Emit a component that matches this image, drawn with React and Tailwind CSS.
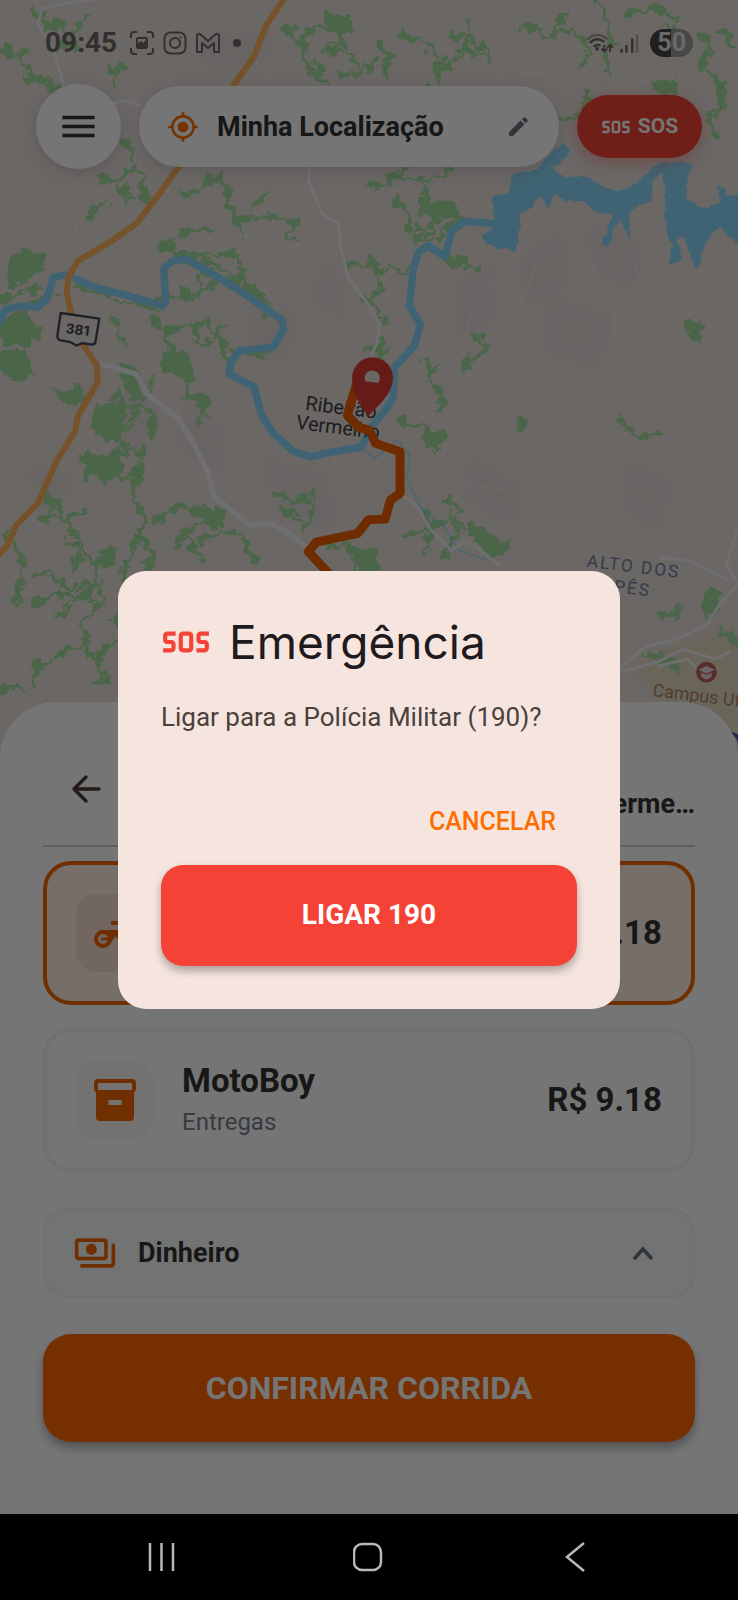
import { MdEdit, MdMenu, MdMyLocation, MdOutlinePayments, MdSos } from 'react-icons/md'

const forests = [
  'M70 15l30 40 25-10 15 30-10 20 30 5-5-30 35-40',
  'M0 105l35 12 30 38 45 35 40 30-5 25 35 40',
  'M95 62l40-15 5 40M60 165l50 12 70 50M60 100l-20 30',
  'M225 150l22 8-8 22M262 138l-14 20',
  'M255 300l30 18-5 25M210 378l40 10 35-35 25 20-8 40 25 20M260 395l10 35 18-12M190 465l18-28 20-6',
  'M385 410l45 0 10-30 28-5 22 28-12 25 30 40 45-10 55 5 20 10-15 30 25 10M510 455l2 50M530 440l45-30',
  'M600 60l40 20 30-25 40 5 15 30-30 5M640 85l10 60 45 30-30-50M700 50l-10-30M690 105l60 10 10 35M720 165l50-10 30-30',
  'M800 90l25 25-10 45M850 75l50 10 35 40 5 30 50-55 5-60M935 130l-5 50-30 0M985 100l60 30M955 70l60 20 30 40',
  'M1110 55l50 20 50-10 25 15M1200 30l-20 30M1230 70l20 45-15 30M1290 110l5 50M1300 100l-10-60-30-40M1330 30l50-10 60 10-10 40-20-15',
  'M1250 190l-10 60-60 0-20 30M1250 215l40 10M1490 70l25 40-30 30 50 40M1530 60l30 45M1520 160l20 60-35 30 20 50',
  'M780 400l60-20 40-40 80-5M820 375l90 10 50-25M900 400l30 60-20 40-30-20M950 440l30 30-35 20M870 500l60 15 10-25M840 420l30 40-5 40',
  'M735 560l60 10 75 5M790 545l20 65-25 30M770 630l60 60M810 720l-5 40M780 740l50 5',
  'M945 555l80 15M970 540l20 30M900 760l25 60 20 40-20 20M905 800l30-30M985 780l50-40-30-30',
  'M160 605l70 25 110 30M370 545l45-5 30 20 60 30 50 35 40 50 10 30-30 45-50 5',
  'M385 625l25 5 40-25 50-15M420 640l10-60 20 0M335 530l60-40 60 0M350 520l40 30 50-10 60 0 20 40-30 20 60 30 20 40',
  'M325 675l20 30 35 60 25 40M350 705l90-20 30 40 20 60 10-40M330 640l50-10M410 690l20 50 50-50M360 760l50 40-20 40 50 10-20 50M420 850l30 40',
  'M245 670l10 50 15 10M265 780l0 40 40 30 20-50',
  'M0 640l40-20 60-5M10 690l30-30 40 50M60 650l60-30M120 840l50 10 30-20',
  'M240 840l50 30-30 60 10 40M220 880l70-20 40 20-10 60M170 980l50 0 30-30 40 10M250 970l-60 20-10 40',
  'M300 990l-20 30-30-10M305 940l-10 60-15 60 30 50-30 60-20 50 30 70M360 1080l60 0 30 20-60 30M330 1110l50-40 60 30',
  'M90 1050l20 20-10 40M80 1100l50 0 50-10M115 1060l40 70 20 30-20 60M140 1150l50 30 20 50-30 40 40 20M70 1230l30-20 40 40 50-10 30 20-20 40-30 30 30 60 20 20',
  'M70 1290l40-30 50 10M120 1310l60-50 40-20M70 1430l60-40 50-20 30 40 20 40-30 0M80 1400l-10 60M210 1390l30-30 40 0M240 1310l50 50-20-80',
  'M0 1470l30-20 30 20M10 1130l40 60-15 100M300 1140l30 30-20 40M370 1160l20-30 40 60M420 1150l50-20 50 10 20 60',
  'M580 1050l50 20 40-30-10 60-20 30M600 1080l50 30M700 1170l40-20 20 30-10 40',
  'M860 1140l60-20 40-30 20 30M900 1080l20 40-20 60M940 1060l40 20-20 40 60 20 60 20M770 1180l20 30M940 1190l30-60',
  'M1000 720l30-10M1310 890l50 40 55-15M1400 1310l50-20-20 30M1500 1290l20-40M840 895l60 10 35 40-10 20',
]

const groves = [
  'M18 545L55 532 100 545 92 572 45 600 20 605z',
  'M0 690L50 668 90 700 60 735 20 735 0 720z',
  'M0 745L50 750 70 790 40 805 0 790z',
  'M350 745L400 755 410 795 380 800 345 775z',
  'M110 830L170 825 180 855 145 860z',
  'M205 865L265 855 262 930 225 938 190 900z',
  'M170 965L255 960 260 1000 220 1030 180 995z',
  'M400 1080L450 1075 475 1090 470 1120 440 1115z',
  'M205 1175L240 1170 250 1195 225 1210 205 1200z',
  'M690 40L740 38 755 65 720 70z',
  'M360 205L420 195 415 225 365 220z',
  'M890 420L945 430 965 455 925 465 895 450z',
  'M1390 170L1435 175 1430 200 1390 195z',
  'M1460 680L1490 680 1485 730 1465 710z',
  'M1000 1110L1060 1150 1070 1180 1040 1185 1005 1145z',
  'M1500 1250L1535 1255 1515 1300 1505 1310z',
  'M750 1165L800 1175 810 1205 770 1215z',
  'M260 770L300 790 295 830 255 815z',
  'M900 915L945 920 930 950 905 945z',
  'M1095 885L1125 888 1115 918 1098 912z',
  'M1370 1385L1420 1395 1445 1425 1400 1410z',
  'M1530 1330L1568 1350 1568 1380 1545 1365z',
]

const lanes = [
  'M540 0l30 30 20 0',
  'M540 125l35 55',
  'M0 470l100 20 60-10 5 110 40-10',
  'M150 350l20 200 60 20 240-60 100-20',
  'M330 200l40 300M620 480l-60 130 50 80',
  'M1050 0l20 150-60 80M1070 150l150 10 60 30 120-20 90 50',
  'M1568 340l-60 40M1100 560l-90 60-20 100M1140 560l-80 200-100 60-20 150 60 60 120 20 60 100 80 100',
  'M1240 550l70 80-10 120 70 70-20 150M1300 680l160-40 100 40M1200 900l20 160-60 120M1350 560l40 180 60 60',
  'M40 900l10 180 60 60M0 1250l110 20-20 110M500 1130l90 50M380 1010l100 60',
  'M700 950l60 150 90 60M560 1000l-30 150M620 770l80 50M1460 830l-30 250 60 110',
]

function CityMap() {
  return (
    <svg
      className="absolute inset-x-0 top-0 h-[762px] w-full bg-[#e8e0dd]"
      viewBox="0 0 1568 1620"
      preserveAspectRatio="xMidYMin slice"
      fill="none"
      strokeLinejoin="round"
      aria-hidden="true"
    >
      <defs>
        <filter id="ragged" x="0" y="0" width="1568" height="1620" filterUnits="userSpaceOnUse">
          <feTurbulence type="fractalNoise" baseFrequency="0.045" numOctaves="3" seed="4" />
          <feDisplacementMap in="SourceGraphic" scale="34" xChannelSelector="R" yChannelSelector="G" />
        </filter>
        <filter id="shore" x="0" y="0" width="1568" height="1620" filterUnits="userSpaceOnUse">
          <feTurbulence type="fractalNoise" baseFrequency="0.06" numOctaves="2" seed="9" />
          <feDisplacementMap in="SourceGraphic" scale="14" xChannelSelector="R" yChannelSelector="G" />
        </filter>
        <filter id="relief" x="0" y="0" width="1568" height="1620" filterUnits="userSpaceOnUse">
          <feGaussianBlur stdDeviation="12" />
        </filter>
      </defs>

      <g fill="#d6cdcb" opacity=".35" filter="url(#relief)">
        <path d="M420 90l160-20-30 60-110 10zM230 880l60-60 40 60-40 80zM540 640l80 30-20 90-70-20zM1100 560l90-60 10 100-70 50zM980 600l60-40 0 120-60 30zM1250 490l90 20 20 90-80-10z" />
        <path d="M560 980l120 30 30 100-100-20zM1010 980l90 60-20 70-90-60zM1180 640l110 40-30 90-100-30zM60 1000l90 10-40 90zM400 860l70 60-10 80-70-50zM1340 980l80 60-30 80-60-60zM700 560l-30 80 60 30z" />
      </g>
      <path d="M1340 1420l120-60 108-30v310h-80l-60-140z" fill="#e8dcc2" filter="url(#relief)" />

      <g stroke="#f4efee" strokeWidth="4" opacity=".4">
        {lanes.map((d) => (
          <path key={d} d={d} />
        ))}
      </g>

      <g stroke="#a2dd9d" filter="url(#ragged)">
        <g strokeWidth="7">
          {forests.map((d) => (
            <path key={d} d={d} />
          ))}
        </g>
        <g strokeWidth="16" strokeDasharray="26 40 14 58">
          {forests.map((d) => (
            <path key={d} d={d} />
          ))}
        </g>
        <g fill="#a2dd9d" strokeWidth="4">
          {groves.map((d) => (
            <path key={d} d={d} />
          ))}
        </g>
      </g>

      {/* river and reservoir */}
      <g stroke="#8cd8fa" strokeLinecap="round">
        <path
          strokeWidth="16"
          d="M-5 690L12 658 45 650 80 652 100 635 113 590 140 584M160 592L200 610 270 628 345 650 352 640 348 570 365 555 395 550 440 575 520 625 570 660 600 680 602 700 580 738 510 745 490 770 487 795 540 822 555 880 580 920 625 960 660 970 720 958 768 950 790 905 820 870 835 845 838 780 880 735 893 690 870 650 878 570 890 535 910 522 945 545 960 490 990 470 1045 475"
        />
        <path strokeWidth="4" opacity=".6" d="M770 950l25 25 50-40 25 30-5 55 30 60 50 40 30 50 60 20" />
      </g>
      <path
        filter="url(#shore)"
        fill="#8cd8fa"
        d="M1195 300L1212 320 1202 340 1172 358 1205 380 1240 375 1290 400 1325 405 1370 375 1400 345 1470 345 1460 380 1458 420 1480 440 1510 442 1530 425 1525 385 1545 415 1580 415V525L1555 510 1530 480 1505 500 1492 540 1482 572 1468 545 1448 500 1440 520 1450 555 1425 560 1430 520 1415 490 1412 400 1405 365 1388 385 1382 425 1345 445 1335 470 1340 510 1315 465 1290 530 1280 520 1300 455 1265 450 1240 430 1215 425 1200 432 1180 410 1165 440 1145 415 1130 440 1105 455 1100 525 1090 535 1030 515 1025 500 1050 480 1045 418 1080 410 1090 370 1140 360z"
      />

      {/* secondary roads */}
      <g stroke="#f1f2f8" strokeLinecap="round">
        <path strokeWidth="6" d="M135 180L115 110 80 50 90 18 150 5 200 0M235 220L265 213 300 225" />
        <path
          strokeWidth="6"
          d="M658 350L655 385 685 455 718 475 725 530 740 590 785 650 808 690 800 730 785 765M860 1055L890 1080 910 1120 960 1170 985 1150 1010 1160 1060 1200"
        />
        <path
          strokeWidth="11"
          d="M215 773L290 795 310 835 380 890 410 940 440 1000 455 1055 530 1115 575 1112 610 1130 660 1170"
        />
        <path
          strokeWidth="6"
          d="M1310 1425L1370 1375 1430 1360 1500 1330 1525 1290 1568 1240M1310 1430L1400 1405 1450 1380 1520 1400 1550 1385M1568 1120l-25 80 25 40M1543 1230l-80-40-60-5M1400 1415l60-15 40 40"
        />
      </g>

      {/* highway */}
      <path
        stroke="#ffb25c"
        strokeWidth="13"
        d="M605-5L565 55 540 120 490 190 420 310 375 360 340 410 290 475 240 510 165 555 145 590 142 620 152 670 175 730 205 775 208 810 165 885 160 915 120 980 80 1070 35 1115 15 1160-5 1182"
      />
      <path
        d="M129 665L211 677 203 725Q202 733 193 732L175 729 163 734 150 727 129 723Q121 721 122 712z"
        fill="#e8e0dd"
        stroke="#434a58"
        strokeWidth="5"
      />
      <text transform="rotate(7 166 700)" x="140" y="711" fill="#3f4654" className="font-['Inter'] text-[29px] font-bold">
        381
      </text>

      <g fill="#3f4148" className="font-['Roboto'] text-[42px]">
        <text transform="rotate(7 650 868)" x="648" y="871">Ribeirão</text>
        <text transform="rotate(7 628 908)" x="628" y="911">Vermelho</text>
      </g>
      <g fill="#76829f" className="font-['Roboto'] text-[37px] tracking-[4px]">
        <text transform="rotate(7 1248 1202)" x="1246" y="1204">ALTO DOS</text>
        <text transform="rotate(7 1290 1252)" x="1290" y="1256">IPÊS</text>
      </g>

      <circle cx="1501" cy="1428" r="22" fill="#c4605b" />
      <path d="M1484 1423l17-8 18 8-18 8zM1490 1429v9l11 6 11-6v-9l-11 5z" fill="#eadfdd" />
      <text transform="rotate(7 1388 1475)" x="1386" y="1479" fill="#b08263" className="font-['Roboto'] text-[38px]">
        Campus Uf
      </text>
      <path d="M1553 1554l20 8v40l-7-30z" fill="#4656b8" />

      {/* planned route */}
      <path
        stroke="#f06000"
        strokeWidth="19"
        d="M795 815L757 818 738 882 762 908 785 914 798 942 850 960V1048L830 1062 818 1103 783 1104 760 1133 672 1152 655 1172 705 1225"
      />
      <path
        d="M791 759A44 44 0 0 0 748 804C748 835 765 860 782 884 804 862 835 835 835 803A44 44 0 0 0 791 759z"
        fill="#de3b38"
      />
      <circle cx="791" cy="803" r="16" fill="#e8e0dd" />
      <path d="M776 810l29 4a16 16 0 0 1-29-4z" fill="#de3b38" />
    </svg>
  )
}

function StatusBar() {
  return (
    <div className="relative flex h-[84px] items-center justify-between px-[45px] pt-px text-[#6e6868]">
      <div className="flex items-center gap-[9px]">
        <span className="mr-1 text-[28px] leading-8 font-bold">09:45</span>
        <svg className="size-6" viewBox="0 0 24 24" fill="none" stroke="currentColor" strokeWidth="2">
          <path d="M1 7V4a3 3 0 0 1 3-3h3M17 1h3a3 3 0 0 1 3 3v3M23 17v3a3 3 0 0 1-3 3h-3M7 23H4a3 3 0 0 1-3-3v-3" />
          <path
            fillRule="evenodd"
            d="M8 6h8a2 2 0 0 1 2 2v8a2 2 0 0 1-2 2H8a2 2 0 0 1-2-2V8a2 2 0 0 1 2-2zM8 8v4l3-2 2 2 3-3V8z"
            fill="currentColor"
            stroke="none"
          />
        </svg>
        <svg className="size-6" viewBox="0 0 24 24" fill="none" stroke="currentColor" strokeWidth="2">
          <rect x="1.500" y="1.500" width="21" height="21" rx="6" />
          <circle cx="12" cy="12" r="5" />
          <circle cx="17.500" cy="6.500" r="1" fill="currentColor" stroke="none" />
        </svg>
        <svg className="size-6" viewBox="0 0 24 24" fill="none" stroke="currentColor" strokeWidth="2" strokeLinejoin="round">
          <path d="M1 21V5a2 2 0 0 1 3-2l8 7 8-7a2 2 0 0 1 3 2v16h-5v-9l-6 5-6-5v9z" />
        </svg>
        <span className="ml-1 size-2 rounded-full bg-current" />
      </div>
      <div className="flex items-center gap-[11px]">
        <svg className="h-6 w-[54px]" viewBox="0 0 56 24" fill="none" stroke="currentColor" strokeWidth="2.500">
          <path d="M2 9Q12-1 23 8" opacity=".5" />
          <path d="M5 12Q12 5 20 11M9 16Q13 12 16 15" />
          <circle cx="12.500" cy="18" r="2" fill="currentColor" stroke="none" />
          <path d="M20 14v7M17 18l3 3 3-3M26 21v-7M23 17l3-3 3 3" strokeWidth="2" />
          <path d="M38 22v-4M43 22v-8M49 22V7" />
          <path d="M54 22V3" opacity=".45" />
        </svg>
        <span className="rounded-full bg-linear-to-r from-[#484646] from-50% to-[#a29d9c] to-50% px-[7px] text-[25px] leading-7 font-bold text-[#e6e3e2]">
          50
        </span>
      </div>
    </div>
  )
}

function TopBar() {
  return (
    <header className="relative flex items-center gap-[18px] px-9">
      <button
        type="button"
        aria-label="Menu"
        className="flex size-[85px] shrink-0 items-center justify-center rounded-full bg-white text-[#333333] shadow-[0_4px_18px_rgba(0,0,0,0.15)]"
      >
        <MdMenu size={43} />
      </button>
      <button
        type="button"
        className="flex h-[81px] min-w-0 flex-1 items-center rounded-full bg-white px-7 text-left shadow-[0_4px_18px_rgba(0,0,0,0.15)]"
      >
        <MdMyLocation size={32} className="shrink-0 text-[#ff6d00]" />
        <span className="ml-[18px] flex-1 truncate text-[27px] leading-9 font-bold text-[#333333]">
          Minha Localização
        </span>
        <MdEdit size={25} className="shrink-0 text-[#6b7280]" />
      </button>
      <button
        type="button"
        className="flex h-[63px] w-[125px] shrink-0 items-center justify-center gap-[7px] rounded-full bg-[#f44336] text-[21px] font-bold text-white shadow-[0_4px_16px_rgba(244,67,54,0.4)]"
      >
        <MdSos size={30} />
        SOS
      </button>
    </header>
  )
}

function MotoIcon() {
  return (
    <svg className="h-12 w-14" viewBox="0 0 56 48" fill="none" stroke="currentColor" strokeWidth="4">
      <path d="M24 14h10l13 12M14 23h14l6 8 8-12" />
      <path d="M12 21h22L24 33h-8z" fill="currentColor" stroke="none" />
      <circle cx="16" cy="30" r="7" fill="#f5e1d5" />
      <circle cx="43" cy="30" r="7" />
      <path d="M14 30h8" strokeWidth="3" />
    </svg>
  )
}

function BoxIcon() {
  return (
    <svg className="size-12" viewBox="0 0 24 24" fill="currentColor">
      <path
        fillRule="evenodd"
        d="M3.500 1.500h17A2 2 0 0 1 22.500 3.500V6.500A2 2 0 0 1 21.500 8.300V20.500A2 2 0 0 1 19.500 22.500H4.500A2 2 0 0 1 2.500 20.500V8.300A2 2 0 0 1 1.500 6.500V3.500A2 2 0 0 1 3.500 1.500zM3.500 3.500V7h17V3.500zM8.700 12v2.500h6.600V12z"
      />
    </svg>
  )
}

function RideOption({ name, detail, price, selected, icon }) {
  return (
    <button
      type="button"
      aria-pressed={selected}
      className={
        selected
          ? 'flex items-center gap-7 rounded-[28px] border-4 border-[#f56800] bg-[#fff0e5] px-[29px] py-[27px] text-left'
          : 'flex items-center gap-7 rounded-[28px] border-4 border-[#f3f3f4] bg-white px-[29px] py-[27px] text-left'
      }
    >
      <span
        className={
          selected
            ? 'flex size-[78px] shrink-0 items-center justify-center rounded-[20px] bg-[#f7dfd2] text-[#f56800]'
            : 'flex size-[78px] shrink-0 items-center justify-center rounded-[20px] bg-[#fdf9f6] text-[#f56800]'
        }
      >
        {icon}
      </span>
      <span className="flex flex-1 flex-col">
        <span className="text-[33px] leading-[44px] font-bold text-[#333333]">{name}</span>
        <span className="text-[24px] leading-[38px] text-[#7b8190]">{detail}</span>
      </span>
      <span className="text-[33px] leading-[44px] font-bold text-[#333333]">{price}</span>
    </button>
  )
}

function RideSheet() {
  return (
    <main className="relative mt-auto flex flex-col rounded-t-[56px] bg-white px-[43px] pt-11 pb-[72px]">
      <div className="flex h-[101px] items-start justify-between border-b-2 border-[#ddd0c8]">
        <button type="button" aria-label="Voltar" className="flex size-[86px] items-center justify-center text-[#4a3b36]">
          <svg className="size-8" viewBox="0 0 32 32" fill="none" stroke="currentColor" strokeWidth="3.500" strokeLinecap="round" strokeLinejoin="round">
            <path d="M29 16H4M16 4L4 16l12 12" />
          </svg>
        </button>
        <p className="mt-10 text-[27px] leading-9 font-bold text-[#333333]">Verme…</p>
      </div>

      <div className="mt-[14px] flex flex-col gap-[23px]">
        <RideOption selected name="Moto" detail="Viagens" price="R$ 9.18" icon={<MotoIcon />} />
        <RideOption name="MotoBoy" detail="Entregas" price="R$ 9.18" icon={<BoxIcon />} />
      </div>

      <button
        type="button"
        className="mt-9 flex h-[90px] items-center rounded-[24px] border-2 border-[#f2f3f4] bg-[#f8fbfa] px-7 text-[27px] font-bold text-[#333333]"
      >
        <MdOutlinePayments size={44} className="text-[#f56800]" />
        <span className="ml-[21px] flex-1 text-left">Dinheiro</span>
        <svg className="mr-3 h-4 w-5" viewBox="0 0 20 16" fill="none" stroke="#6b7280" strokeWidth="3.500" strokeLinecap="round">
          <path d="M2 13l8-9 8 9" />
        </svg>
      </button>

      <button
        type="button"
        className="mt-9 h-[108px] rounded-[28px] bg-[#ff6600] text-[32px] font-bold text-white shadow-[0_6px_10px_rgba(0,0,0,0.3)]"
      >
        CONFIRMAR CORRIDA
      </button>
    </main>
  )
}

function EmergencyDialog() {
  return (
    <div className="absolute inset-0 flex items-center justify-center bg-black/54 px-[118px] pt-[65px]">
      <div
        role="dialog"
        aria-modal="true"
        aria-labelledby="emergency-title"
        className="flex w-full max-w-[560px] flex-col rounded-[28px] bg-[#f6e5df] p-[43px]"
      >
        <div className="flex items-center gap-[18px] leading-[56px]">
          <MdSos size={50} className="text-[#f44336]" />
          <h1 id="emergency-title" className="font-['Inter',sans-serif] text-[46px] text-[#1f1a1d]">
            Emergência
          </h1>
        </div>
        <p className="mt-[29px] text-[26px] leading-9 text-[#4a403c]">Ligar para a Polícia Militar (190)?</p>
        <button type="button" className="mt-11 h-[86px] self-end px-[21px] text-[25px] font-medium text-[#ff6d00]">
          CANCELAR
        </button>
        <button
          type="button"
          className="h-[101px] rounded-[22px] bg-[#f44336] text-[28px] font-bold text-white shadow-[0_5px_9px_rgba(0,0,0,0.3)]"
        >
          LIGAR 190
        </button>
      </div>
    </div>
  )
}

function SystemNav() {
  return (
    <nav className="flex h-[86px] items-center justify-around bg-black px-[58px] text-[#b9b9b9]">
      <button type="button" aria-label="Recentes">
        <svg className="size-8" viewBox="0 0 32 32" fill="none" stroke="currentColor" strokeWidth="2.500">
          <path d="M4 2v28M15.500 2v28M27 2v28" />
        </svg>
      </button>
      <button type="button" aria-label="Início">
        <svg className="size-8" viewBox="0 0 32 32" fill="none" stroke="currentColor" strokeWidth="2.500">
          <rect x="1" y="3" width="27" height="26" rx="8" />
        </svg>
      </button>
      <button type="button" aria-label="Voltar ao aplicativo anterior">
        <svg className="size-8" viewBox="0 0 32 32" fill="none" stroke="currentColor" strokeWidth="2.500">
          <path d="M24 2L7 16l17 14" />
        </svg>
      </button>
    </nav>
  )
}

export default function App() {
  return (
    <div className="flex min-h-screen flex-col bg-black font-['Roboto',sans-serif]">
      <div className="relative flex flex-1 flex-col overflow-hidden bg-white">
        <CityMap />
        <StatusBar />
        <TopBar />
        <RideSheet />
        <EmergencyDialog />
      </div>
      <SystemNav />
    </div>
  )
}
